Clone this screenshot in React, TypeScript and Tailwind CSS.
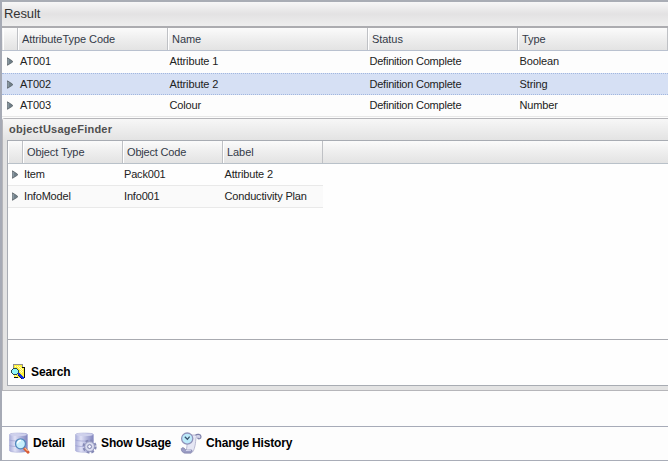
import React from "react";

const Arrow = () => (
  <svg width="6" height="9" viewBox="0 0 7 9" preserveAspectRatio="none" className="block">
    <path d="M.5 .8 6.3 4v1.2L.5 8.3Z" fill="#71818b" stroke="#555d63" strokeWidth=".8" />
    <path d="M1.3 2v4.8" stroke="#9caab2" />
  </svg>
);

const Cylinder = ({ id }: { id: string }) => (
  <>
    <defs>
      <linearGradient id={id}>
        <stop offset="0" stopColor="#a9add9" />
        <stop offset=".3" stopColor="#e0e1f6" />
        <stop offset="1" stopColor="#7f83bd" />
      </linearGradient>
    </defs>
    <path d="M.5 2.5C1 .5 18 .5 18.5 2.5v16.3c-1 2-17 2-18 0Z" fill={`url(#${id})`} stroke="#a3a6d2" strokeWidth=".5" />
    <ellipse cx="9.5" cy="2.7" rx="8.6" ry="1.5" fill="#cfd1ec" />
    <path d="M.5 8c2 1.4 16 1.4 18 0M.5 13.5c2 1.4 16 1.4 18 0" fill="none" stroke="#9599cb" strokeWidth=".6" />
  </>
);

const DetailIcon = () => (
  <svg width="22" height="22" viewBox="0 0 22 22">
    <Cylinder id="detailBody" />
    <path d="m15.5 16.5 3.6 3.8" stroke="#d85b35" strokeWidth="2.8" strokeLinecap="round" />
    <path d="m15.7 15.9 3 3" stroke="#ffc391" strokeWidth="1.1" />
    <circle cx="11.5" cy="11.8" r="5" fill="#c6effc" stroke="#5488bd" strokeWidth="1.3" />
    <path d="M8.5 11.5c.3-2 1.5-3 3.5-3" fill="none" stroke="#fff" strokeWidth="1.3" />
  </svg>
);

const UsageIcon = () => (
  <svg width="22" height="22" viewBox="0 0 22 22">
    <Cylinder id="usageBody" />
    <circle cx="14.6" cy="14.6" r="5.8" fill="none" stroke="#8589b5" strokeWidth="2.6" strokeDasharray="2.6 1.955" />
    <circle cx="14.6" cy="14.6" r="5" fill="#cbcee5" stroke="#9194bd" strokeWidth=".8" />
    <circle cx="14.6" cy="14.6" r="3.4" fill="none" stroke="#dfe1f2" strokeWidth="1" />
    <circle cx="14.6" cy="14.6" r="1.9" fill="#f5f6fe" stroke="#787daa" strokeWidth=".9" />
  </svg>
);

const HistoryIcon = () => (
  <svg width="22" height="22" viewBox="0 0 22 22">
    <path d="M8 3h10c-3 2-1.8 7-3.3 12-1 4-2 5.5-4 6H4c3-3 3-6 3-11Z" fill="#e6e7f4" stroke="#a0a2c1" strokeWidth=".7" />
    <path d="M1.3 16.5c.5-1.3 3-1 3.7.5.7 1.5 3 1 6 .8 1.5 0 1.5 2-.3 3.3H5.5c-2.7 0-4.7-2.2-4.2-4.6Z" fill="#9b9dc4" stroke="#777aa3" strokeWidth=".6" />
    <path d="m6 18.5 5-.3" stroke="#d9daf0" />
    <path d="M15.5 3.3c1.7-1.8 5.5-1 5.5 1.4s-3 2.7-3.4 1" fill="#d5d6ea" stroke="#7c7fa8" strokeWidth="1.2" />
    <circle cx="7.2" cy="6.6" r="5.6" fill="#bceafa" stroke="#9092ba" strokeWidth="1.3" />
    <path d="m4.8 4.8 2.6 2.5 2.2-2.7" fill="none" stroke="#36506b" strokeWidth="1.2" />
  </svg>
);

const SearchIcon = () => (
  <svg width="15" height="16" viewBox="0 0 15 16" shapeRendering="crispEdges">
    <path d="M3 1h8v2h2v11H3Z" fill="#fff33a" />
    <path d="M2.5 4V.5h9M11 1v2h2" fill="none" stroke="#909090" />
    <path d="M11 3.5h2.5v10H12M3 13.5h4" fill="none" stroke="#111" />
    <path d="M4 2h1v1H4zM6 2h1v1H6zM8 2h1v1H8zM7 3h1v1H7zM9 3h1v1H9zM8 4h1v1H8zM10 4h1v1h-1zM9 5h1v1H9zM11 5h1v1h-1zM10 6h1v1h-1zM9 7h1v1H9zM11 7h1v1h-1zM10 8h1v1h-1zM4 11h1v1H4zM5 12h1v1H5z" fill="#fffbc2" />
    <path d="M2 5h4v1h1v3H6v1H2V9H1V6h1Z" fill="#8ff6f8" />
    <path d="M2 4.5h4M1.5 5v1M.5 6v3M1.5 9v1M2 10.5h4M6.5 5v1M7.5 6v3M6.5 9v1" fill="none" stroke="#26474f" />
    <path d="M7 9h2v1h1v1h1v1h1v1h1v2h-2v-1h-1v-1H9v-1H8v-1H7Z" fill="#1433df" />
    <path d="M7 11.5h1M8 12.5h1M9 13.5h1M10 14.5h1" stroke="#07136b" />
  </svg>
);

const headTone = "bg-linear-to-b from-[#fbfbfb] via-[#eeeeee] via-50% to-[#e3e3e3]";

function Head({ label, width, tracking = "tracking-[-0.06px]", offset = "pl-[3px]" }: { label: string; width: string; tracking?: string; offset?: string }) {
  return (
    <div className={`flex h-[22px] shrink-0 items-center border-r border-[#bfc1c5] ${width}`}>
      <div className={`flex h-full w-full items-center border-l border-white text-[#333a48] ${offset} ${tracking}`}>{label}</div>
    </div>
  );
}

function ResultRow({ code, name, type, tone }: { code: string; name: string; type: string; tone: string }) {
  return (
    <div className={`flex items-center ${tone}`}>
      <span className="w-[18px] shrink-0 pl-[5px]"><Arrow /></span>
      <span className="w-[149.5px] shrink-0 tracking-[-0.1px]">{code}</span>
      <span className="w-[200px] shrink-0 tracking-[-0.13px]">{name}</span>
      <span className="w-[150px] shrink-0 tracking-[-0.22px]">Definition Complete</span>
      <span className="tracking-[-0.12px]">{type}</span>
    </div>
  );
}

function UsageRow({ type, code, label, tone }: { type: string; code: string; label: string; tone: string }) {
  return (
    <div className={`flex h-[22px] w-[315px] items-center border-b border-[#e9e9e9] ${tone}`}>
      <span className="w-4 shrink-0 pl-1"><Arrow /></span>
      <span className="w-[100px] shrink-0 tracking-[-0.18px]">{type}</span>
      <span className="w-[100.5px] shrink-0 tracking-[-0.18px]">{code}</span>
      <span className="tracking-[-0.16px]">{label}</span>
    </div>
  );
}

export default function App() {
  return (
    <main className="flex h-[461px] w-[668px] flex-col overflow-hidden border-t-2 border-b border-l-2 border-t-[#a9adb5] border-b-[#a9adb8] border-l-[#a6aab5] bg-[#fdfdfd] font-['Liberation_Sans',Arial,sans-serif] text-[11px] leading-none whitespace-nowrap text-[#222]">
      <h1 className="flex h-[26px] shrink-0 items-center border-b-2 border-[#acacb0] bg-linear-to-b from-[#f7f7f7] via-[#e3e2e3] via-50% to-[#eeeeee] pb-px pl-[2px] text-[13px] tracking-[-0.1px] text-[#333]">Result</h1>
      <section className="h-[90px] shrink-0">
        <div className={`flex h-[23px] border-b border-[#b9c1cf] pl-px ${headTone}`}>
          <Head label="" width="w-[15px]" />
          <Head label="AttributeType Code" width="w-[150px]" />
          <Head label="Name" width="w-[200px]" />
          <Head label="Status" width="w-[150px]" />
          <Head label="Type" width="w-[150px]" />
        </div>
        <ResultRow code="AT001" name="Attribute 1" type="Boolean" tone="h-[22px] pb-[2px]" />
        <ResultRow code="AT002" name="Attribute 2" type="String" tone="h-[22px] border-y border-dotted border-[#a2b7df] bg-[#d6e0f4]" />
        <ResultRow code="AT003" name="Colour" type="Number" tone="h-[22px] border-b border-[#e8e8e8]" />
      </section>
      <section className="flex h-[273px] shrink-0 flex-col rounded-tl-[3px] border-y border-l border-[#b6b6ba] bg-[#e3e3e3]">
        <h2 className="flex h-[21px] shrink-0 items-center bg-linear-to-b from-[#f7f7f7] to-[#e3e3e3] pl-[6px] text-[11px] font-bold tracking-[0.25px] text-[#4f4f4f]">objectUsageFinder</h2>
        <div className="ml-1 flex h-[246px] flex-col border-y border-l border-[#a8acb3] bg-[#fefefe]">
          <div className="h-[199px] border-b border-[#a8aab0]">
            <div className={`flex h-[23px] border-b border-[#b9c1c9] ${headTone}`}>
              <Head label="" width="w-[15px]" />
              <Head label="Object Type" width="w-[100px]" tracking="tracking-[-0.1px]" />
              <Head label="Object Code" width="w-[100px]" tracking="tracking-[-0.18px]" />
              <Head label="Label" width="w-[100px]" />
            </div>
            <UsageRow type="Item" code="Pack001" label="Attribute 2" tone="" />
            <UsageRow type="InfoModel" code="Info001" label="Conductivity Plan" tone="bg-[#fafafa]" />
          </div>
          <button className="mt-[24px] ml-[3px] flex h-4 items-center gap-[5px] text-[12px] font-bold tracking-[-0.08px] text-black"><SearchIcon />Search</button>
        </div>
      </section>
      <div className="h-[36px] shrink-0 border-b border-[#a7abb8]" />
      <nav className="flex h-[33px] shrink-0 items-center pb-[2px] pl-[7px] text-[12px] font-bold text-black">
        <button className="flex w-[66px] items-center gap-[2px] tracking-[-0.1px]"><DetailIcon />Detail</button>
        <button className="flex w-[105px] items-center gap-[4px] tracking-[-0.12px]"><UsageIcon />Show Usage</button>
        <button className="flex items-center gap-[4px] tracking-[-0.18px]"><HistoryIcon />Change History</button>
      </nav>
    </main>
  );
}
